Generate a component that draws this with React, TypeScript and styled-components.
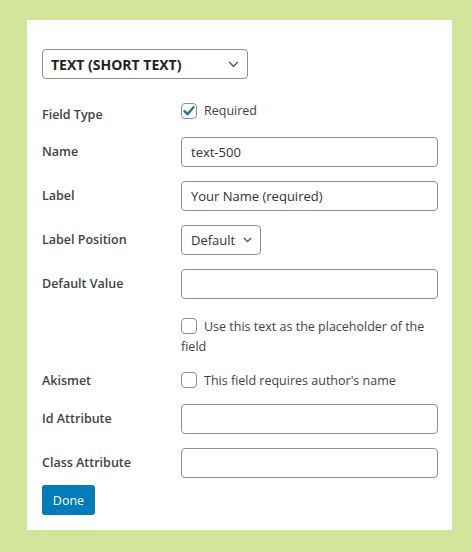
import React from "react";
import styled, { createGlobalStyle } from "styled-components";

const GlobalStyle = createGlobalStyle`
  html, body {
    margin: 0;
    padding: 0;
    background: #d5e49b;
  }
  body {
    font-family: "Open Sans", "Noto Sans", sans-serif;
    color: #3c434a;
  }
`;

const Page = styled.div`
  width: 472px;
  height: 552px;
  box-sizing: border-box;
  padding: 20px 20px 0 27px;
  background: #d5e49b;
`;

const Panel = styled.div`
  width: 425px;
  box-sizing: border-box;
  padding: 29px 14px 15px 15px;
  background: #ffffff;
  display: flex;
  flex-direction: column;
`;

const TypeSelect = styled.div`
  width: 206px;
  height: 30px;
  box-sizing: border-box;
  border: 1px solid #8c8f94;
  border-radius: 4px;
  display: flex;
  align-items: center;
  justify-content: space-between;
  padding: 0 8px 0 8px;
  font-size: 14px;
  font-weight: 700;
  color: #1d2327;
`;

const Row = styled.div<{ $gap: number; $align?: string }>`
  margin-top: ${(p) => p.$gap}px;
  display: grid;
  grid-template-columns: 139px 257px;
  align-items: ${(p) => p.$align || "center"};
`;

const Label = styled.div<{ $shift?: number }>`
  font-size: 12.5px;
  font-weight: 600;
  color: #3c434a;
  line-height: 20px;
  padding-top: ${(p) => p.$shift || 0}px;
`;

const TextInput = styled.div`
  height: 30px;
  box-sizing: border-box;
  border: 1px solid #8c8f94;
  border-radius: 4px;
  padding: 0 9px;
  display: flex;
  align-items: center;
  font-size: 13px;
  color: #2c3338;
`;

const SmallSelect = styled.div`
  width: 80px;
  height: 30px;
  box-sizing: border-box;
  border: 1px solid #8c8f94;
  border-radius: 4px;
  padding: 0 8px 0 9px;
  display: flex;
  align-items: center;
  justify-content: space-between;
  font-size: 13px;
  color: #2c3338;
`;

const CheckLine = styled.div`
  font-size: 12.5px;
  line-height: 20px;
  color: #3c434a;
`;

const Box = styled.span`
  display: inline-flex;
  align-items: center;
  justify-content: center;
  vertical-align: -3px;
  width: 16px;
  height: 16px;
  box-sizing: border-box;
  border: 1px solid #8c8f94;
  border-radius: 4px;
  margin-right: 7px;
  background: #fff;
`;

const DoneButton = styled.button`
  margin-top: 7px;
  align-self: flex-start;
  width: 53px;
  height: 30px;
  border: none;
  border-radius: 3px;
  background: #007cba;
  color: #ffffff;
  font-family: "Open Sans", "Noto Sans", sans-serif;
  font-size: 12.5px;
  padding: 0;
`;

const Chevron = ({ w }: { w: number }) => (
  <svg width={w} height={w / 2 + 1} viewBox="0 0 10 6" fill="none">
    <path d="M1 1l4 4 4-4" stroke="#50575e" strokeWidth="1.4" />
  </svg>
);

const CheckBox = ({ checked }: { checked?: boolean }) => (
  <Box>
    {checked && (
      <svg width="14" height="14" viewBox="0 0 14 14">
        <path
          d="M2.5 7.2l3 3 6-7"
          fill="none"
          stroke="#2271b1"
          strokeWidth="2.4"
          strokeLinecap="round"
          strokeLinejoin="round"
        />
      </svg>
    )}
  </Box>
);

export default function App() {
  return (
    <Page>
      <GlobalStyle />
      <Panel>
        <TypeSelect>
          TEXT (SHORT TEXT)
          <Chevron w={11} />
        </TypeSelect>

        <Row $gap={22} $align="start">
          <Label $shift={4}>Field Type</Label>
          <CheckLine>
            <CheckBox checked />
            Required
          </CheckLine>
        </Row>

        <Row $gap={12}>
          <Label>Name</Label>
          <TextInput>text-500</TextInput>
        </Row>

        <Row $gap={14}>
          <Label>Label</Label>
          <TextInput>Your Name (required)</TextInput>
        </Row>

        <Row $gap={14}>
          <Label>Label Position</Label>
          <div>
            <SmallSelect>
              Default
              <Chevron w={9} />
            </SmallSelect>
          </div>
        </Row>

        <Row $gap={14}>
          <Label>Default Value</Label>
          <TextInput />
        </Row>

        <Row $gap={18} $align="start">
          <span />
          <CheckLine>
            <CheckBox />
            Use this text as the placeholder of the field
          </CheckLine>
        </Row>

        <Row $gap={14}>
          <Label>Akismet</Label>
          <CheckLine>
            <CheckBox />
            This field requires author's name
          </CheckLine>
        </Row>

        <Row $gap={13}>
          <Label>Id Attribute</Label>
          <TextInput />
        </Row>

        <Row $gap={14}>
          <Label>Class Attribute</Label>
          <TextInput />
        </Row>

        <DoneButton>Done</DoneButton>
      </Panel>
    </Page>
  );
}
